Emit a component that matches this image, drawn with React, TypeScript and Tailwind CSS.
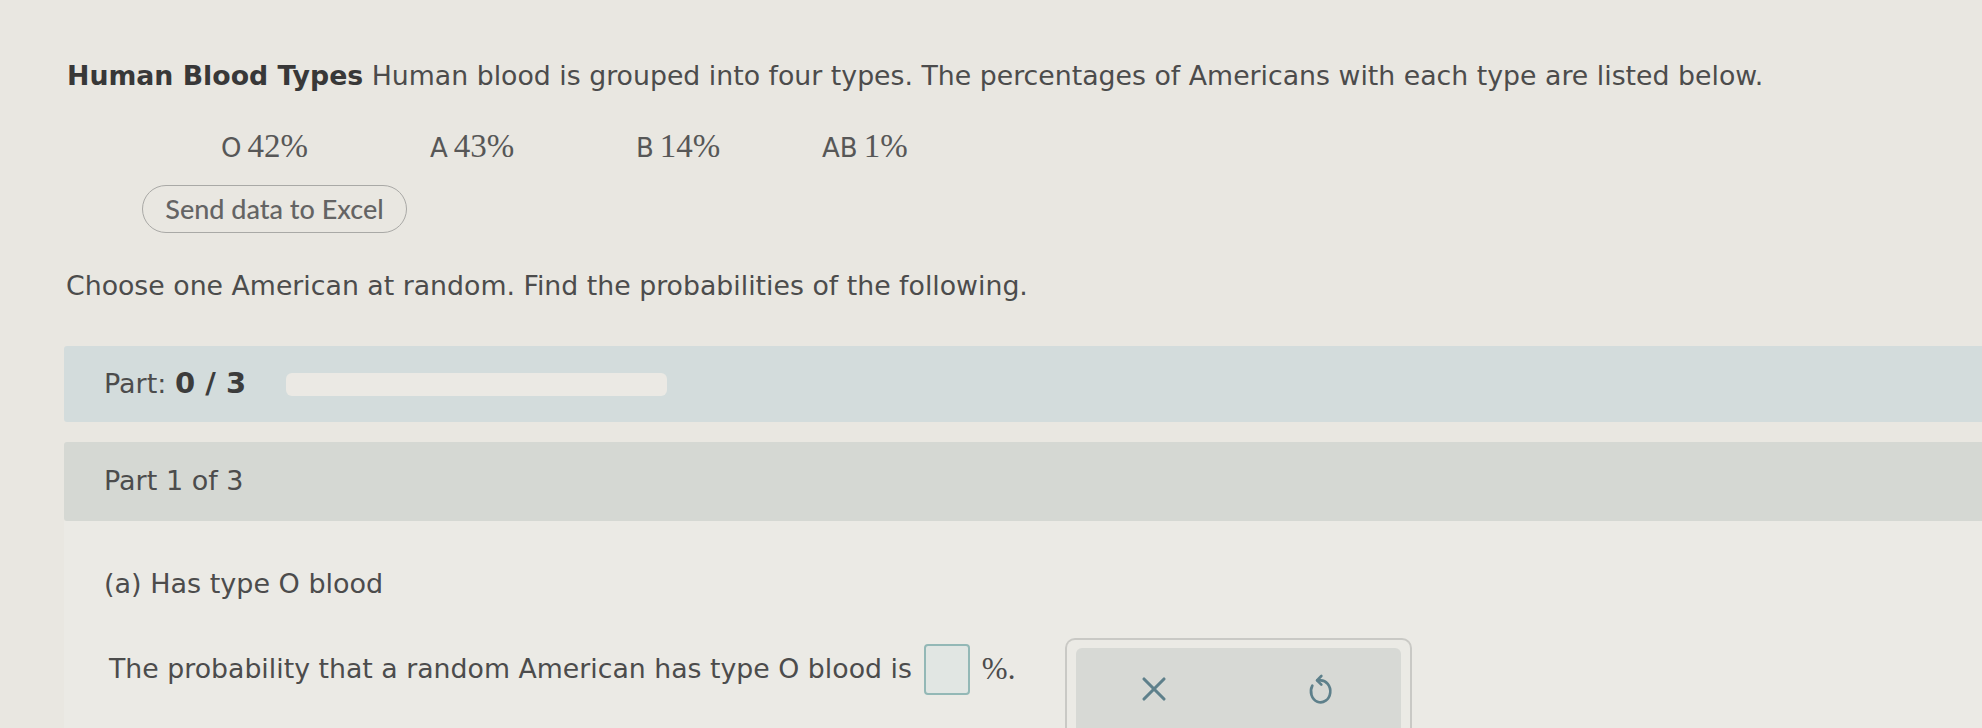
import { X } from 'lucide-react';

const values = [
  { label: 'O', pct: '42', width: 'w-[209px]' },
  { label: 'A', pct: '43', width: 'w-[206px]' },
  { label: 'B', pct: '14', width: 'w-[186px]' },
  { label: 'AB', pct: '1', width: 'w-[160px]' },
];

const sans = "font-['DejaVu_Sans',Verdana,sans-serif]";
const serif = "font-['Liberation_Serif','Times_New_Roman',serif]";

// circular "start over" arrow, head at the top pointing left
const UndoIcon = () => (
  <svg width="40" height="40" viewBox="0 0 24 24" fill="none" stroke="currentColor" strokeWidth="1.6" strokeLinecap="round" strokeLinejoin="round">
    <path d="M7.4 10A5.8 6.6 0 1 0 12 6.8H10.4" />
    <path d="M12.8 4.2L10.2 6.8l2.6 2.6" />
  </svg>
);

export default function App() {
  return (
    <div className={`min-h-[728px] w-full overflow-hidden bg-[#e9e7e1] text-[#4c4c4c] ${sans}`}>
      <div className="pl-[64px]">
        {/* intro */}
        <p className="ml-[3px] pt-[60px] text-[26.75px] leading-[32px] whitespace-nowrap">
          <span className="font-bold text-[#383838]">Human Blood Types</span> Human blood is grouped into four
          types. The percentages of Americans with each type are listed below.
        </p>

        <div className="ml-[157px] mt-[38px] flex h-[32px] items-center text-[#575757]">
          {values.map((v) => (
            <span key={v.label} className={`${v.width} flex items-baseline whitespace-nowrap leading-none`}>
              <span className={`${sans} text-[26px]`}>{v.label}</span>
              <span className={`${serif} ml-[6px] text-[33px]`}>{v.pct}%</span>
            </span>
          ))}
        </div>

        <button className="ml-[78px] mt-[23px] flex h-[48px] w-[265px] items-center justify-center rounded-full border-[1.5px] border-[#a9a9a6] font-['Lato',sans-serif] text-[27px] font-medium text-[#646464]">
          Send data to Excel
        </button>

        <p className="ml-[2px] mt-[37px] text-[26.75px] leading-[32px]">
          Choose one American at random. Find the probabilities of the following.
        </p>

        {/* progress */}
        <div className="mt-[44px] flex h-[76px] items-center rounded-l-[3px] bg-[#d3dcdc] pl-[40px]">
          <span className="text-[27px]">
            Part: <span className="text-[29px] font-bold text-[#3c3c3c]">0 / 3</span>
          </span>
          <div className="ml-[40px] h-[23px] w-[381px] rounded-[6px] bg-[#ebe9e4]" />
        </div>

        <div className="mt-[20px] flex h-[79px] items-center rounded-l-[3px] bg-[#d5d8d3] pl-[40px]">
          <span className="text-[27px]">Part 1 of 3</span>
        </div>

        {/* question panel */}
        <div className="h-[220px] bg-[#ebeae5] pl-[40px] pt-[47px]">
          <p className="text-[27px] leading-[32px]">(a) Has type O blood</p>

          <div className="mt-[44px] flex items-start">
            <div className="flex h-[51px] items-center">
              <span className="ml-[5px] text-[26.75px]">The probability that a random American has type O blood is</span>
              <span className="ml-[12px] h-[51px] w-[46px] rounded-[4px] border-2 border-[#93b8b6] bg-[#e1e6e3]" />
              <span className={`ml-[12px] text-[31px] ${serif}`}>%.</span>
            </div>

            <div className="-mt-[6px] ml-[50px] h-[100px] w-[347px] rounded-t-[10px] border-2 border-b-0 border-[#c9c9c5] px-[9px] pt-[8px]">
              <div className="flex h-[90px] items-center rounded-t-[6px] bg-[#d7d9d5] pb-[8px]">
                <span className="ml-[58px] flex w-[40px] justify-center text-[#5e808b]">
                  <X size={40} strokeWidth={1.9} />
                </span>
                <span className="ml-[126px] flex w-[40px] justify-center text-[#5e808b]">
                  <UndoIcon />
                </span>
              </div>
            </div>
          </div>
        </div>
      </div>
    </div>
  );
}
